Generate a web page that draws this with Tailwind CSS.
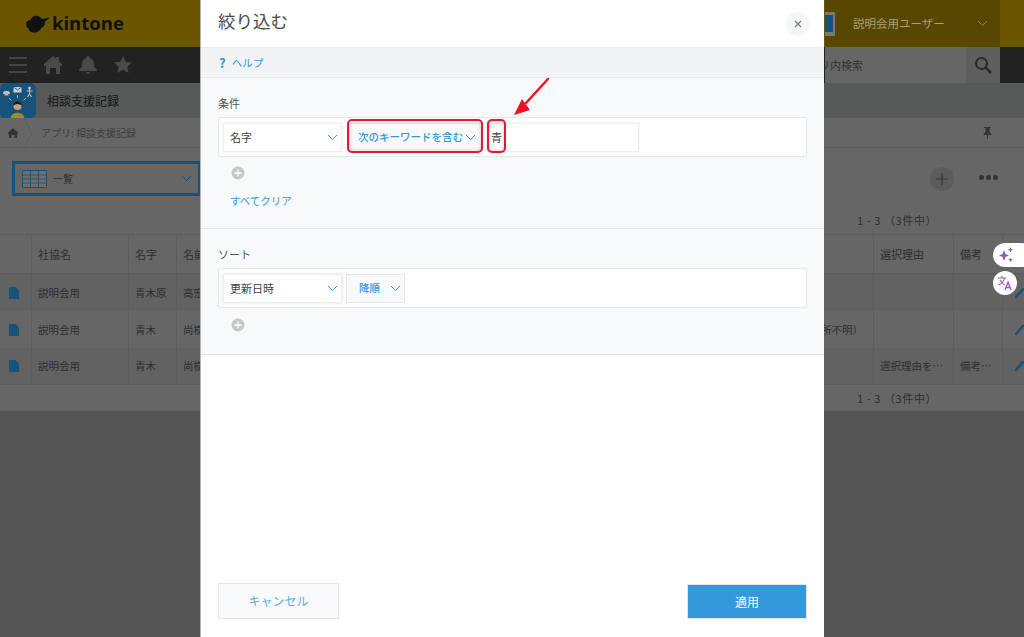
<!DOCTYPE html>
<html lang="ja">
<head>
  <meta charset="UTF-8" />
  <title>絞り込む – kintone</title>
  <script src="https://cdn.jsdelivr.net/npm/@tailwindcss/browser@4"></script>
</head>
<body class="relative w-[1024px] h-[637px] overflow-hidden bg-[#555555] font-['Noto_Sans_CJK_JP','Noto_Sans',sans-serif] text-[#2e2e2e]">

  <!-- dimmed page behind the dialog -->
  <div class="flex flex-col h-full">
    <header class="h-[47px] shrink-0 bg-[#6b5600] flex items-center">
      <div class="pl-[26px] flex items-center gap-[1px]">
        <svg width="25" height="18" viewBox="0 0 25 18"><path fill="#111" d="M0 9.500C0 6.500 2 5 4.500 5 5.500 2 8.500 0 11.500 1c2 .5 3.500 1.500 4.500 3l8-1.500-5.500 4.500c1 2.500-.5 5-3 5.500-1 3-4.500 5.500-8 5-3 0-5-2-5-4C1 12.500 0 11 0 9.500z"/></svg>
        <span class="font-['Open_Sans',sans-serif] font-bold text-[18.500px] leading-none text-[#111]">kintone</span>
      </div>
      <div class="ml-auto w-[175px] h-full bg-[#574700] flex items-center">
        <div class="w-[10px] h-[24px] bg-[#7b7b6a] flex items-center"><div class="w-[8px] h-[17px] bg-[#17527a]"></div></div>
        <span class="ml-[18px] text-[11.500px] text-[#a89f7a] whitespace-nowrap">説明会用ユーザー</span>
        <svg class="ml-[32px] shrink-0" width="11" height="7" viewBox="0 0 11 7"><path d="M1 1l4.500 4.500L10 1" fill="none" stroke="#8f8660" stroke-width="1"/></svg>
      </div>
      <div class="w-[24px] h-full bg-[#6b5600]"></div>
    </header>

    <nav class="h-[36px] shrink-0 bg-[#222222] flex items-center">
      <svg class="ml-[9px]" width="18" height="18" viewBox="0 0 18 18"><path d="M0 2h18M0 9h18M0 16h18" stroke="#444444" stroke-width="2"/></svg>
      <svg class="ml-[17px]" width="18" height="18" viewBox="0 0 18 18"><path fill="#4a4a4a" d="M9 0l3 2.700V1h3v4.400L18 8v2h-2v8h-4v-6H6v6H2v-8H0V8z"/></svg>
      <svg class="ml-[17px]" width="18" height="18" viewBox="0 0 18 18"><path fill="#4a4a4a" d="M9 0c1 0 2 1 2 2 3 1 4 4 4 7 0 2 1 3 3 5v1H0v-1c2-2 3-3 3-5 0-3 1-6 4-7 0-1 1-2 2-2zM7 16h4c0 1-1 2-2 2s-2-1-2-2z"/></svg>
      <svg class="ml-[17px]" width="18" height="18" viewBox="0 0 18 18"><path fill="#4a4a4a" d="M9 0l2.600 6 6.400.6-4.800 4.200L14.600 17 9 13.700 3.400 17l1.400-6.200L0 6.600 6.400 6z"/></svg>
      <div class="ml-auto w-[141px] h-full bg-[#666666] flex items-center justify-end pr-[103px] text-[11px] text-[#333] whitespace-nowrap">リ内検索</div>
      <div class="w-[34px] h-full bg-[#5e5e5e] flex items-center justify-center">
        <svg width="18" height="18" viewBox="0 0 18 18"><circle cx="7.500" cy="7.500" r="5.500" fill="none" stroke="#2a2a2a" stroke-width="2"/><path d="M11.500 11.500l5.500 5.500" stroke="#2a2a2a" stroke-width="2.500"/></svg>
      </div>
      <div class="w-[24px]"></div>
    </nav>

    <div class="h-[35px] shrink-0 bg-[#585a59] flex items-center">
      <div class="w-[36px] h-[36px] rounded-[6px] bg-[#17527a] overflow-hidden">
        <svg width="36" height="36" viewBox="0 0 36 36">
          <path d="M3 10c0-3 7-3 7 0v1H3zM4.500 9.500h4v3h-4z" fill="#bbb"/>
          <rect x="13.500" y="4" width="8" height="5.500" fill="#ccc"/><path d="M13.500 4l4 3 4-3" fill="none" stroke="#17527a" stroke-width=".8"/>
          <circle cx="29.500" cy="5" r="1.500" fill="#bbb"/><path d="M29.500 6v5m-3-3h6m-3 3l-2 3m2-3l2 3" stroke="#bbb" stroke-width="1.100" fill="none"/>
          <path d="M9 15l2.500 2.500M17.500 12v3M26 15l-2.500 2.500" stroke="#9bb" stroke-width="1"/>
          <circle cx="17.500" cy="23" r="4" fill="#c9a27d"/><path d="M13 22.500c0-5.500 9-5.500 9 0-3-2-6-2-9 0z" fill="#1c1c1c"/>
          <path d="M10.500 36c0-8.500 14-8.500 14 0z" fill="#a08a2a"/>
        </svg>
      </div>
      <span class="ml-[11px] text-[12px] font-medium text-[#1f1f1f]">相談支援記録</span>
    </div>

    <div class="h-[30px] shrink-0 bg-[#666666] border-b border-[#5a5a5a] flex items-center">
      <svg class="ml-[8px]" width="10" height="10" viewBox="0 0 10 10"><path fill="#333" d="M5 0l5 4.500V6H9v4H6.500V7h-3v3H1V6H0V4.500z"/></svg>
      <svg class="ml-[6px]" width="9" height="30" viewBox="0 0 9 30"><path d="M0 0l8 15-8 15" fill="none" stroke="#5a5a5a"/></svg>
      <span class="ml-[8px] text-[10px] text-[#3c3c3c]">アプリ: 相談支援記録</span>
      <svg class="ml-auto mr-[32px]" width="9" height="12" viewBox="0 0 9 12"><path fill="#333" d="M1 0h7v1H6.500v4L8.500 7v1H5v4H4V8H.5V7l2-2V1H1z"/></svg>
    </div>

    <div class="h-[86px] shrink-0 bg-[#666666] relative">
      <div class="flex items-center pt-[13px]">
        <div class="ml-[12px] w-[189px] h-[35px] border-[3px] border-[#17527a] flex items-center pl-[7px]">
          <svg width="25" height="18" viewBox="0 0 25 18"><rect x=".5" y=".5" width="24" height="17" rx="1" fill="#6f6f6f" stroke="#17527a"/><path d="M1 5h23M1 9h23M1 13h23M8.500 1v16M16.500 1v16" stroke="#17527a" stroke-width=".8"/></svg>
          <span class="ml-[6px] text-[10px] text-[#2e2e2e]">一覧</span>
          <svg class="ml-auto mr-[6px]" width="11" height="7" viewBox="0 0 11 7"><path d="M1 1l4.500 4.500L10 1" fill="none" stroke="#17527a"/></svg>
        </div>
        <div class="ml-auto mr-[70px] w-[24px] h-[24px] rounded-full bg-[#5c5c5c] flex items-center justify-center">
          <svg width="12" height="12" viewBox="0 0 12 12"><path d="M6 0v12M0 6h12" stroke="#333" stroke-width="1.200"/></svg>
        </div>
        <div class="absolute right-[26px] top-[27px] flex gap-[2px]">
          <span class="w-[5px] h-[5px] rounded-full bg-[#333]"></span><span class="w-[5px] h-[5px] rounded-full bg-[#333]"></span><span class="w-[5px] h-[5px] rounded-full bg-[#333]"></span>
        </div>
      </div>
      <div class="absolute left-[857px] top-[64px] text-[11px] leading-[16px] text-[#2e2e2e] tracking-[0.6px]">1 - 3 （3件中）</div>
    </div>

    <!-- table -->
    <div class="grid grid-cols-[32px_97px_48px_697px_80px_49px_21px] text-[10.500px] text-[#2e2e2e] bg-[#666666]">
      <div class="h-[40px] border-y border-r border-[#5c5c5c]"></div>
      <div class="h-[40px] border-y border-r border-[#5c5c5c] pl-[6px] flex items-center text-[11px]">社協名</div>
      <div class="h-[40px] border-y border-r border-[#5c5c5c] pl-[6px] flex items-center text-[11px]">名字</div>
      <div class="h-[40px] border-y border-r border-[#5c5c5c] pl-[6px] flex items-center text-[11px]">名前</div>
      <div class="h-[40px] border-y border-r border-[#5c5c5c] pl-[6px] flex items-center text-[11px]">選択理由</div>
      <div class="h-[40px] border-y border-r border-[#5c5c5c] pl-[6px] flex items-center text-[11px]">備考</div>
      <div class="h-[40px] border-y border-[#5c5c5c]"></div>

      <div class="h-[37px] bg-[#626262] border-r border-[#5c5c5c] pr-[3px] flex items-center justify-center"><svg width="10" height="12" viewBox="0 0 10 12"><path fill="#17527a" d="M0 0h6.500L10 3.500V12H0z"/></svg></div>
      <div class="h-[37px] bg-[#626262] border-r border-[#5c5c5c] pl-[6px] flex items-center">説明会用</div>
      <div class="h-[37px] bg-[#626262] border-r border-[#5c5c5c] pl-[6px] flex items-center">青木原</div>
      <div class="h-[37px] bg-[#626262] border-r border-[#5c5c5c] pl-[6px] flex items-center">高宏</div>
      <div class="h-[37px] bg-[#626262] border-r border-[#5c5c5c]"></div>
      <div class="h-[37px] bg-[#626262] border-r border-[#5c5c5c]"></div>
      <div class="h-[37px] bg-[#626262] flex items-center justify-end"><svg width="9" height="10" viewBox="0 0 9 10"><path d="M0 10l9-10" stroke="#17527a" stroke-width="2.500"/></svg></div>

      <div class="h-[37px] bg-[#666666] border-r border-[#5c5c5c] pr-[3px] flex items-center justify-center"><svg width="10" height="12" viewBox="0 0 10 12"><path fill="#17527a" d="M0 0h6.500L10 3.500V12H0z"/></svg></div>
      <div class="h-[37px] bg-[#666666] border-r border-[#5c5c5c] pl-[6px] flex items-center">説明会用</div>
      <div class="h-[37px] bg-[#666666] border-r border-[#5c5c5c] pl-[6px] flex items-center">青木</div>
      <div class="h-[37px] bg-[#666666] border-r border-[#5c5c5c] pl-[6px] pr-[10px] flex items-center justify-between"><span>尚樹</span><span>所不明）</span></div>
      <div class="h-[37px] bg-[#666666] border-r border-[#5c5c5c]"></div>
      <div class="h-[37px] bg-[#666666] border-r border-[#5c5c5c]"></div>
      <div class="h-[37px] bg-[#666666] flex items-center justify-end"><svg width="9" height="10" viewBox="0 0 9 10"><path d="M0 10l9-10" stroke="#17527a" stroke-width="2.500"/></svg></div>

      <div class="h-[37px] bg-[#626262] border-r border-b border-[#5c5c5c] pr-[3px] flex items-center justify-center"><svg width="10" height="12" viewBox="0 0 10 12"><path fill="#17527a" d="M0 0h6.500L10 3.500V12H0z"/></svg></div>
      <div class="h-[37px] bg-[#626262] border-r border-b border-[#5c5c5c] pl-[6px] flex items-center">説明会用</div>
      <div class="h-[37px] bg-[#626262] border-r border-b border-[#5c5c5c] pl-[6px] flex items-center">青木</div>
      <div class="h-[37px] bg-[#626262] border-r border-b border-[#5c5c5c] pl-[6px] flex items-center">尚樹</div>
      <div class="h-[37px] bg-[#626262] border-r border-b border-[#5c5c5c] pl-[6px] flex items-center">選択理由を…</div>
      <div class="h-[37px] bg-[#626262] border-r border-b border-[#5c5c5c] pl-[6px] flex items-center">備考…</div>
      <div class="h-[37px] bg-[#626262] border-b border-[#5c5c5c] flex items-center justify-end"><svg width="9" height="10" viewBox="0 0 9 10"><path d="M0 10l9-10" stroke="#17527a" stroke-width="2.500"/></svg></div>
    </div>
    <div class="h-[26px] shrink-0 bg-[#666666] pl-[857px] flex items-center text-[11px] text-[#2e2e2e] tracking-[0.6px]">1 - 3 （3件中）</div>
  </div>

  <!-- floating widgets -->
  <div class="absolute left-[993px] top-[243px] w-[40px] h-[24px] rounded-full bg-white pl-[5px] flex items-center">
    <svg width="16" height="16" viewBox="0 0 16 16"><path fill="#8a5cb8" d="M6 3l1.500 4L11 8.500 7.500 10 6 14l-1.500-4L1 8.500 4.500 7zM12.500 0l.8 2 2 .8-2 .8-.8 2-.8-2-2-.8 2-.8zM12.500 10.500l.7 1.600 1.600.7-1.600.7-.7 1.600-.7-1.600-1.600-.7 1.600-.7z"/></svg>
  </div>
  <div class="absolute left-[993px] top-[271px] w-[24px] h-[24px] rounded-full bg-white flex items-center justify-center">
    <svg width="16" height="16" viewBox="0 0 16 16"><path d="M1 3h8M5 1v2M7.500 3C7 6 4 9 1.500 10M3 5c1 2 3 4 5 5" fill="none" stroke="#8a5cb8" stroke-width="1.100"/><path d="M8 15l3-8 3 8M9 12.500h4" fill="none" stroke="#8a5cb8" stroke-width="1.300"/></svg>
  </div>

  <!-- dialog -->
  <div class="absolute left-[200px] top-0 w-[624px] h-[637px] bg-white border-l border-[#b4b4b4] flex flex-col text-[#333333]">
    <div class="h-[47px] shrink-0 flex items-center justify-between pl-[17px] pr-[14px]">
      <h1 class="text-[17.500px] font-normal text-[#4a4a4a] mb-[4px]">絞り込む</h1>
      <button class="w-[24px] h-[24px] rounded-full bg-[#f4f6f7] flex items-center justify-center">
        <svg width="8" height="8" viewBox="0 0 8 8"><path d="M1 1l6 6M7 1l-6 6" stroke="#777" stroke-width="1.100"/></svg>
      </button>
    </div>
    <div class="h-[31px] shrink-0 bg-[#f2f3f5] border-y border-[#e8eaec] pl-[18px] flex items-center text-[10.500px] text-[#3498db]">
      <span class="font-bold text-[13px] leading-none mr-[6px]">?</span>ヘルプ
    </div>

    <section class="h-[151px] shrink-0 bg-[#f7f9fa] border-b border-[#e3e7e8] pl-[17px] pr-[17px] pt-[17px]">
      <div class="text-[11px] leading-[16px] text-[#555]">条件</div>
      <div class="mt-[6px] h-[40px] bg-white border border-[#e3e7e8] rounded-[2px] flex items-center gap-[5px] pl-[4px]">
        <div class="w-[119px] h-[29px] bg-white border border-[#eceeef] shadow-[0_0_3px_#eeeeee] flex items-center justify-between pl-[6px] pr-[3px] text-[11px] text-[#444]">
          名字
          <svg width="11" height="7" viewBox="0 0 11 7"><path d="M1 1l4.500 4.500L10 1" fill="none" stroke="#3498db"/></svg>
        </div>
        <div class="w-[135px] h-[29px] bg-[#f7f9fa] border border-[#e3e7e8] flex items-center justify-between pl-[10px] pr-[5px] text-[10.500px] font-medium text-[#3498db] whitespace-nowrap">
          次のキーワードを含む
          <svg class="shrink-0" width="11" height="7" viewBox="0 0 11 7"><path d="M1 1l4.500 4.500L10 1" fill="none" stroke="#3498db"/></svg>
        </div>
        <div class="w-[152px] h-[29px] bg-white border border-[#eceeef] shadow-[0_0_3px_#eeeeee] flex items-center pl-[3px] text-[11px] text-[#444]">青</div>
      </div>
      <div class="mt-[9px] pl-[13px]">
        <svg width="14" height="14" viewBox="0 0 14 14"><circle cx="7" cy="7" r="6.500" fill="#c8c8c8"/><path d="M7 3.500v7M3.500 7h7" stroke="#fff" stroke-width="1.300"/></svg>
      </div>
      <a class="block mt-[13px] ml-[12px] text-[10.500px] leading-[16px] text-[#3498db]">すべてクリア</a>
    </section>

    <section class="h-[126px] shrink-0 bg-[#f7f9fa] border-b border-[#e3e7e8] pl-[17px] pr-[17px] pt-[17px]">
      <div class="text-[11px] leading-[16px] text-[#555]">ソート</div>
      <div class="mt-[6px] h-[40px] bg-white border border-[#e3e7e8] rounded-[2px] flex items-center gap-[4px] pl-[4px]">
        <div class="w-[119px] h-[29px] bg-white border border-[#eceeef] shadow-[0_0_3px_#dddddd] flex items-center justify-between pl-[6px] pr-[3px] text-[11px] text-[#444]">
          更新日時
          <svg width="11" height="7" viewBox="0 0 11 7"><path d="M1 1l4.500 4.500L10 1" fill="none" stroke="#3498db"/></svg>
        </div>
        <div class="w-[59px] h-[29px] bg-[#f7f9fa] border border-[#e3e7e8] flex items-center justify-between pl-[12px] pr-[3px] text-[10.500px] font-medium text-[#3498db]">
          降順
          <svg width="11" height="7" viewBox="0 0 11 7"><path d="M1 1l4.500 4.500L10 1" fill="none" stroke="#3498db"/></svg>
        </div>
      </div>
      <div class="mt-[10px] pl-[13px]">
        <svg width="14" height="14" viewBox="0 0 14 14"><circle cx="7" cy="7" r="6.500" fill="#c8c8c8"/><path d="M7 3.500v7M3.500 7h7" stroke="#fff" stroke-width="1.300"/></svg>
      </div>
    </section>

    <div class="mt-auto pb-[18px] pl-[17px] pr-[17px] flex items-end justify-between">
      <button class="w-[121px] h-[36px] bg-[#f7f9fa] border border-[#e3e7e8] text-[12px] text-[#5dade2]">キャンセル</button>
      <button class="w-[120px] h-[35px] bg-[#3498db] border border-[#e3e7e8] text-[12px] text-white">適用</button>
    </div>
  </div>

  <!-- red annotations over the screenshot -->
  <div class="absolute left-[347px] top-[119px] w-[136px] h-[34px] border-2 border-[#e8192c] rounded-[5px] shadow-[inset_0_0_4px_#00000030]"></div>
  <div class="absolute left-[487px] top-[119px] w-[19px] h-[34px] border-2 border-[#e8192c] rounded-[5px] shadow-[inset_0_0_4px_#00000030]"></div>
  <svg class="absolute left-[510px] top-[76px]" width="42" height="42" viewBox="0 0 42 42">
    <path d="M38 3L16 27" stroke="#f01020" stroke-width="2.500" stroke-linecap="round"/>
    <path d="M4 39l8-16 8 11z" fill="#f01020"/>
  </svg>
</body>
</html>
